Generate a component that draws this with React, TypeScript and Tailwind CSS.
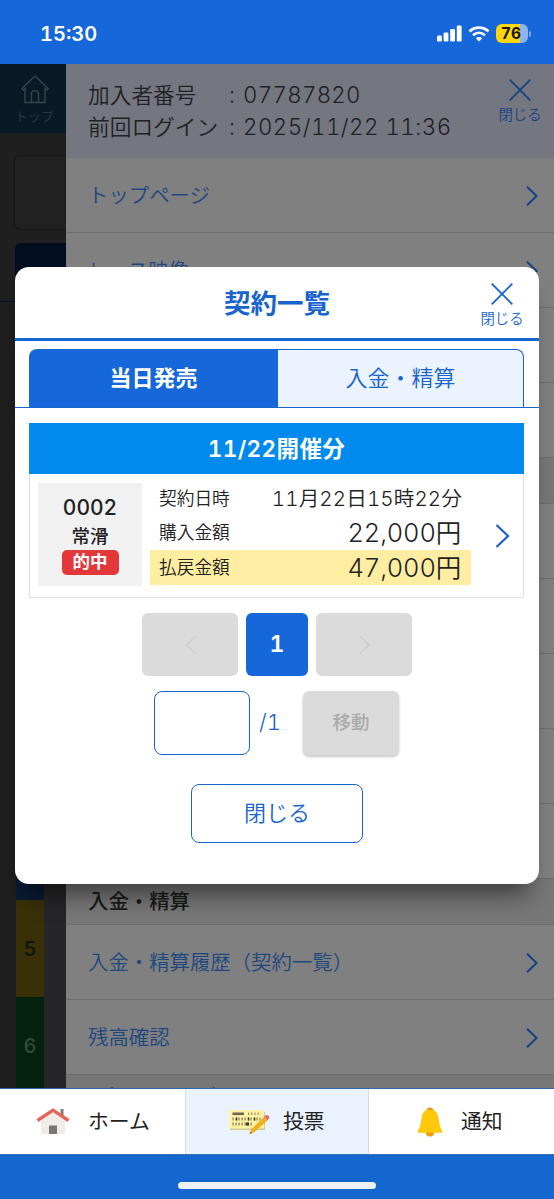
type RowProps = { label?: string };

const betRows = [
  { label: "", row: "h-[22px] bg-[#0a1a33]", text: "" },
  { label: "5", row: "h-[97px] bg-[#393008]", text: "text-[#101010]" },
  { label: "6", row: "h-[91px] bg-[#03230f] pt-[6px]", text: "text-[#33493a]" },
];

const pageFont =
  "font-['Inter','Noto_Sans_CJK_JP',sans-serif] tabular-nums tracking-normal";

function Chevron({ className }: { className?: string }) {
  return (
    <svg
      viewBox="0 0 12 20"
      className={className}
      fill="none"
      stroke="currentColor"
      strokeWidth="1.9"
    >
      <path d="M1 .8 10.6 10 1 19.2" />
    </svg>
  );
}

function CloseMark() {
  return (
    <div className="flex w-[50px] flex-col items-center">
      <svg
        viewBox="0 0 22 22"
        className="size-[22px]"
        fill="none"
        stroke="currentColor"
        strokeWidth="1.9"
      >
        <path d="M.7.7 21.3 21.3M21.3.7.7 21.3" />
      </svg>
      <span className="mt-[4px] text-[14.4px] leading-5 font-[350] whitespace-nowrap">
        閉じる
      </span>
    </div>
  );
}

function StatusBar() {
  return (
    <header className="flex h-16 shrink-0 items-center justify-between bg-[#1567da] pr-[23px] pl-[40px] text-white">
      <span className="mt-[3px] text-[20px] leading-6 font-semibold">
        15:30
      </span>
      <div className="mt-[3px] flex items-center">
        <svg viewBox="0 0 26 17" className="h-[17px] w-[26px]" fill="currentColor">
          <rect x="0" y="10.5" width="4.8" height="6" rx="1.3" />
          <rect x="6.6" y="7.5" width="4.8" height="9" rx="1.3" />
          <rect x="13.2" y="4" width="4.8" height="12.5" rx="1.3" />
          <rect x="19.8" y="0.5" width="4.8" height="16" rx="1.3" />
        </svg>
        <svg viewBox="0 0 22 16" className="ml-[5px] h-4 w-[22px]" fill="none">
          <path
            d="M1.5 5.4C7 .3 15 .3 20.5 5.4"
            stroke="currentColor"
            strokeWidth="2.8"
          />
          <path
            d="M5 9.2C8.6 6 13.4 6 17 9.2"
            stroke="currentColor"
            strokeWidth="2.7"
          />
          <path
            d="M7.8 12.2C9.7 10.5 12.3 10.5 14.2 12.2L11 15.5Z"
            fill="currentColor"
          />
        </svg>
        <span className="ml-[6px] flex h-[19px] w-8 items-center justify-center rounded-[6px] bg-linear-to-r from-[#ffd60a] from-75% to-[#8fb5ec] to-75% pr-[2px] text-[15.5px] font-bold text-[#1a1500]">
          76
        </span>
        <span className="ml-px h-[6px] w-[2px] rounded-r-full bg-[#7ba9eb]" />
      </div>
    </header>
  );
}

function MenuRow({ label }: RowProps) {
  return (
    <li className="flex h-[75px] items-center justify-between border-b border-[#6d6d6d] pt-[2px] pr-4 pl-[22px]">
      <span className="text-[20.4px] leading-8 font-[350] text-[#1d477f]">
        {label}
      </span>
      <Chevron className="h-5 w-3 text-[#113f83]" />
    </li>
  );
}

function MenuHeading({ label }: RowProps) {
  return (
    <li className="flex h-[46px] items-center border-b border-[#6d6d6d] bg-[#777777] pt-[2px] pl-[22px] text-[20.4px] font-medium text-[#1a1a1a]">
      {label}
    </li>
  );
}

function SideRail() {
  return (
    <aside className="flex w-[66px] shrink-0 flex-col bg-[#1f1f1f]">
      <div className="flex h-[69px] shrink-0 flex-col items-center bg-[#071a26] pt-[11px] pl-[3px] text-[#38444b]">
        <svg
          viewBox="0 0 28 29"
          className="h-[29px] w-7"
          fill="none"
          stroke="currentColor"
          strokeWidth="1.4"
        >
          <path d="M1 13.5 14 1l13 12.5-1.5 1.5L24 13.6V27.5H4V13.6L2.5 15Z" />
          <path d="M10.5 27.5V19c0-4.5 7-4.5 7 0v8.5" />
        </svg>
        <span className="mt-[2px] text-[13px] leading-5 text-[#283841]">トップ</span>
      </div>
      <div className="mt-[22px] ml-[14px] h-[75px] shrink-0 rounded-l-md border border-r-0 border-[#171717] bg-[#212121]" />
      <div className="mt-[13px] ml-[15px] h-[58px] shrink-0 rounded-tl-md bg-[#020d20]" />
      <div className="h-px shrink-0 bg-[#07102a]" />
      <div className="mt-auto bg-linear-to-r from-[#1f1f1f] from-67% to-[#262628] to-67%">
        {betRows.map((item) => (
          <div key={item.label} className={`ml-4 flex w-7 items-center justify-center text-[20px] font-medium ${item.row} ${item.text}`}>
            {item.label}
          </div>
        ))}
      </div>
    </aside>
  );
}

function Drawer() {
  return (
    <section className="min-w-0 flex-1 bg-[#808080]">
      <div className="flex h-[94px] justify-between bg-[#747680] pt-[15px] pr-[9px] pl-[22px]">
        <dl className="grid grid-cols-[133px_auto] grid-rows-[32px_32px] text-[21.7px] leading-8 font-[350] text-[#202124]">
          <dt>加入者番号</dt>
          <dd className="relative text-[22.3px] whitespace-nowrap tracking-[.3px]">
            <span className="absolute left-[8px]">:</span>
            <span className="ml-[22px]">07787820</span>
          </dd>
          <dt>前回ログイン</dt>
          <dd className="relative text-[22.3px] whitespace-nowrap tracking-[.5px]">
            <span className="absolute left-[8px]">:</span>
            <span className="ml-[22px]">2025/11/22 11:36</span>
          </dd>
        </dl>
        <div className="text-[#174582]">
          <CloseMark />
        </div>
      </div>
      <ul>
        <MenuRow label="トップページ" />
        <MenuRow label="レース映像" />
        <MenuRow />
        <MenuRow />
        <MenuHeading />
        <MenuRow />
        <MenuRow />
        <MenuRow />
        <MenuRow />
        <MenuRow />
        <MenuHeading label="入金・精算" />
        <MenuRow label="入金・精算履歴（契約一覧）" />
        <MenuRow label="残高確認" />
        <MenuHeading label="お知らせ・通知" />
      </ul>
    </section>
  );
}

function ContractCard() {
  return (
    <article className="flex h-[124px] border border-t-0 border-[#e1e1e1] pt-[9px] pl-2">
      <div className="flex h-[103px] w-[104px] flex-col items-center bg-[#f1f1f1] pt-[12px] text-[#222]">
        <span className="text-[21px] leading-[26px] font-medium">0002</span>
        <span className="mt-px text-[18.5px] leading-7 font-medium">常滑</span>
        <span className="flex h-[25px] w-[57px] items-center justify-center rounded-[5px] bg-[#e3383a] text-[17.5px] font-bold text-white">
          的中
        </span>
      </div>
      <dl className="ml-2 w-[321px] font-[350] text-[#222]">
        <div className="flex h-[32px] items-center justify-between pt-px pr-[9px] pl-[9px]">
          <dt className="text-[17.7px]">契約日時</dt>
          <dd className="text-[20.6px] tracking-[.1px]">11月22日15時22分</dd>
        </div>
        <div className="flex h-[35px] items-center justify-between pt-px pr-[10px] pl-[9px]">
          <dt className="text-[17.7px]">購入金額</dt>
          <dd className="text-[25.5px] tracking-[-.2px]">22,000円</dd>
        </div>
        <div className="flex h-[35px] items-center justify-between bg-[#ffeea2] pt-px pr-[10px] pl-[9px]">
          <dt className="text-[17.7px]">払戻金額</dt>
          <dd className="text-[25.5px] tracking-[-.2px]">47,000円</dd>
        </div>
      </dl>
      <Chevron className="mt-[41px] ml-[24px] h-6 w-[15px] text-[#1764cf]" />
    </article>
  );
}

function ContractDialog() {
  return (
    <section className="absolute top-[267px] left-[15px] h-[617px] w-[524px] rounded-[14px] bg-white text-[#1764cf] shadow-[0_20px_24px_-10px_rgba(0,0,0,.5)]">
      <div className="relative flex h-[74px] items-center justify-center border-b-3 border-[#1764cf] pt-[2px]">
        <h1 className="text-[26.5px] font-bold">契約一覧</h1>
        <button className="absolute top-[16px] right-[12px]">
          <CloseMark />
        </button>
      </div>
      <div className="flex h-[67px] border-b-[1.5px] border-[#1764cf] pr-[15px] pl-[14px] pt-[8px]">
        <button className="w-[249px] rounded-tl-[8px] bg-[#1567da] text-[22px] font-bold text-white">
          当日発売
        </button>
        <button className="flex-1 rounded-tr-[8px] border border-b-0 border-l-0 border-[#1764cf] bg-[#eaf3fe] text-[22px] font-[350]">
          入金・精算
        </button>
      </div>
      <div className="pt-[15px] pr-[15px] pl-[14px]">
        <h2 className="flex h-[51px] items-center justify-center bg-[#008aed] text-[22.5px] font-semibold tracking-[.4px] text-white">
          11/22開催分
        </h2>
        <ContractCard />
      </div>
      <div className="mt-[15px] flex h-[63px] justify-center gap-2">
        <button className="flex w-24 items-center justify-center rounded-[6px] bg-[#dbdbdb]">
          <Chevron className="h-[18px] w-[11px] rotate-180 text-[#cfcfcf]" />
        </button>
        <button className="w-[62px] rounded-[6px] bg-[#1567da] text-[23px] font-semibold text-white">
          1
        </button>
        <button className="flex w-24 items-center justify-center rounded-[6px] bg-[#dbdbdb]">
          <Chevron className="h-[18px] w-[11px] text-[#cfcfcf]" />
        </button>
      </div>
      <div className="mt-[15px] flex h-[64px] justify-center pr-px">
        <input className="w-24 rounded-[8px] border-[1.5px] border-[#1764cf] bg-white" />
        <span className="ml-[9px] w-[44px] pt-[15px] text-[22px] font-[350]">
          /1
        </span>
        <button className="w-24 rounded-[6px] bg-[#dbdbdb] text-[18.5px] font-medium text-[#aaa] shadow-[0_2px_3px_rgba(0,0,0,.22)]">
          移動
        </button>
      </div>
      <button className="mx-auto mt-[29px] block h-[59px] w-[172px] rounded-[8px] border-[1.5px] border-[#1764cf] text-[22px] font-[350]">
        閉じる
      </button>
    </section>
  );
}

function HomeIcon() {
  return (
    <svg viewBox="0 0 34 28" className="h-7 w-[34px]">
      <path d="M5 13 17 4l12 9v13H5Z" fill="#f0ece7" />
      <path d="M24.5 1h3v10l-3-3Z" fill="#7d7c81" />
      <path
        d="M1.5 12.5 17 2.2l15.500 10.300"
        fill="none"
        stroke="#e56559"
        strokeWidth="3.4"
      />
      <path d="M13 17.500h8V26h-8Z" fill="#777" />
    </svg>
  );
}

function TicketIcon() {
  return (
    <svg viewBox="0 0 42 26" className="h-[26px] w-[42px]">
      <path d="M2 3h35v18H2Z" fill="#cfc99a" />
      <path d="M1 1h35v18.500H1Z" fill="#fff2a4" />
      <path d="M4.500 3.500H16v2.600H4.500Z" fill="#6c6750" />
      <path
        d="M20 4.800h13"
        stroke="#97906b"
        strokeWidth="2.5"
        strokeDasharray="1.2 2"
      />
      <path
        d="M4.500 10h28M4.500 15h20"
        stroke="#817a57"
        strokeWidth="2.800"
        strokeDasharray="1.2 1.8"
      />
      <path d="M8 8.600h1.300v2.800H8zM20 8.600h1.300v2.800H20zM26 8.600h1.300v2.800H26zM18 13.600h3v2.800h-3z" fill="#353322" />
      <path d="m23.500 20 12.500-12 3.500 3.500L26.500 23l-5 2Z" fill="#edb31c" />
      <path d="m36 8 1.800-1.800c1.500-1.200 4.500 1.300 3.300 3L39.500 11.500Z" fill="#e66b72" />
      <path d="m22.500 22.500-1 2.500 2.500-1Z" fill="#775c33" />
    </svg>
  );
}

function BellIcon() {
  return (
    <svg viewBox="0 0 26 30" className="h-[30px] w-[26px]">
      <circle cx="13" cy="4" r="3.500" fill="#e79014" />
      <circle cx="13" cy="25" r="4.500" fill="#f49b0b" />
      <path
        d="M13 2.500c-6 0-8 4-8.500 9L3 19.500.7 24c-.5 1 0 1.700 1 1.700h22.600c1 0 1.500-.7 1-1.700L23 19.500l-1.500-8c-.5-5-2.500-9-8.500-9Z"
        fill="#ffc90b"
      />
    </svg>
  );
}

function BottomNav() {
  return (
    <nav className="flex h-[67px] shrink-0 border-y border-t-[#2c65b1] border-b-[#386fbb] bg-white text-[20.8px] text-[#222]">
      <button className="flex w-[185px] items-center pl-[36px]">
        <HomeIcon />
        <span className="ml-[18px]">ホーム</span>
      </button>
      <button className="flex w-[184px] items-center border-x border-[#d4dbe5] bg-[#eaf2fe] pl-[42px]">
        <TicketIcon />
        <span className="ml-[13px]">投票</span>
      </button>
      <button className="flex flex-1 items-center pl-[48px]">
        <BellIcon />
        <span className="ml-[18px]">通知</span>
      </button>
    </nav>
  );
}

export default function App() {
  return (
    <main className={`relative flex h-[1199px] w-[554px] flex-col overflow-hidden bg-[#1567d0] ${pageFont}`}>
      <StatusBar />
      <div className="flex h-[1024px] shrink-0 overflow-hidden">
        <SideRail />
        <Drawer />
      </div>
      <BottomNav />
      <div className="flex flex-1 justify-center pt-[27px]">
        <div className="h-[7px] w-[198px] rounded-full bg-[#eef1f3]" />
      </div>
      <ContractDialog />
    </main>
  );
}
